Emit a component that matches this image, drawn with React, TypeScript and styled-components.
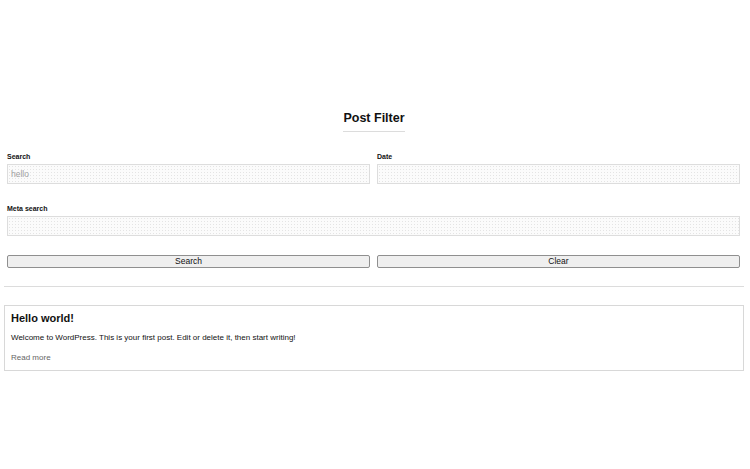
import React from "react";
import styled, { createGlobalStyle } from "styled-components";

const GlobalStyle = createGlobalStyle`
  html, body {
    margin: 0;
    padding: 0;
    background: #fff;
  }
  body {
    font-family: "Liberation Sans", Arial, Helvetica, sans-serif;
    color: #111;
  }
`;

const Page = styled.div`
  padding: 108px 6px 40px 4px;
`;

const Heading = styled.div`
  text-align: center;
`;

const Title = styled.h2`
  display: inline-block;
  margin: 0;
  padding-bottom: 5px;
  font-size: 12.5px;
  line-height: 16px;
  font-weight: 700;
  border-bottom: 1px solid #dcdcdc;
`;

const Form = styled.form`
  padding: 20px 4px 0 3px;
  display: flex;
  flex-direction: column;
  gap: 20px;
`;

const Row = styled.div`
  display: grid;
  grid-template-columns: 1fr 1fr;
  column-gap: 7px;
`;

const Field = styled.div<{ $wide?: boolean }>`
  display: flex;
  flex-direction: column;
  gap: 2px;
  grid-column: ${(p) => (p.$wide ? "1 / -1" : "auto")};
`;

const Label = styled.label`
  font-size: 7px;
  line-height: 10px;
  font-weight: 700;
  color: #111;
`;

const Input = styled.input`
  box-sizing: border-box;
  height: 20px;
  width: 100%;
  margin: 0;
  padding: 0 3px;
  font-family: inherit;
  font-size: 8.5px;
  color: #a0a0a0;
  border: 1px solid #dddddd;
  border-radius: 0;
  background-color: #fbfbfb;
  background-image: radial-gradient(#e4e4e4 0.6px, transparent 0.9px);
  background-size: 3px 3px;
  outline: none;
`;

const Buttons = styled(Row)`
  margin-top: -1px;
`;

const Button = styled.button`
  box-sizing: border-box;
  height: 13px;
  margin: 0;
  padding: 0;
  font-family: inherit;
  font-size: 8.5px;
  line-height: 11px;
  color: #111;
  background: #efefef;
  border: 1px solid #8f8f8f;
  border-radius: 2px;
`;

const Divider = styled.hr`
  margin: 18px 0 18px;
  border: 0;
  border-top: 1px solid #dcdcdc;
`;

const Card = styled.article`
  border: 1px solid #d8d8d8;
  padding: 6px 6px 7px;
`;

const CardTitle = styled.h3`
  margin: 0;
  font-size: 11px;
  line-height: 13px;
  font-weight: 700;
`;

const CardText = styled.p`
  margin: 8px 0 0;
  font-size: 8px;
  line-height: 10px;
`;

const ReadMore = styled.a`
  display: block;
  margin-top: 10px;
  font-size: 8px;
  line-height: 10px;
  color: #666;
  text-decoration: none;
`;

export default function App() {
  return (
    <>
      <GlobalStyle />
      <Page>
        <Heading>
          <Title>Post Filter</Title>
        </Heading>
        <Form onSubmit={(e) => e.preventDefault()}>
          <Row>
            <Field>
              <Label>Search</Label>
              <Input defaultValue="hello" />
            </Field>
            <Field>
              <Label>Date</Label>
              <Input />
            </Field>
          </Row>
          <Row>
            <Field $wide>
              <Label>Meta search</Label>
              <Input />
            </Field>
          </Row>
          <Buttons>
            <Button type="submit">Search</Button>
            <Button type="button">Clear</Button>
          </Buttons>
        </Form>
        <Divider />
        <Card>
          <CardTitle>Hello world!</CardTitle>
          <CardText>
            Welcome to WordPress. This is your first post. Edit or delete it, then start writing!
          </CardText>
          <ReadMore href="#">Read more</ReadMore>
        </Card>
      </Page>
    </>
  );
}
